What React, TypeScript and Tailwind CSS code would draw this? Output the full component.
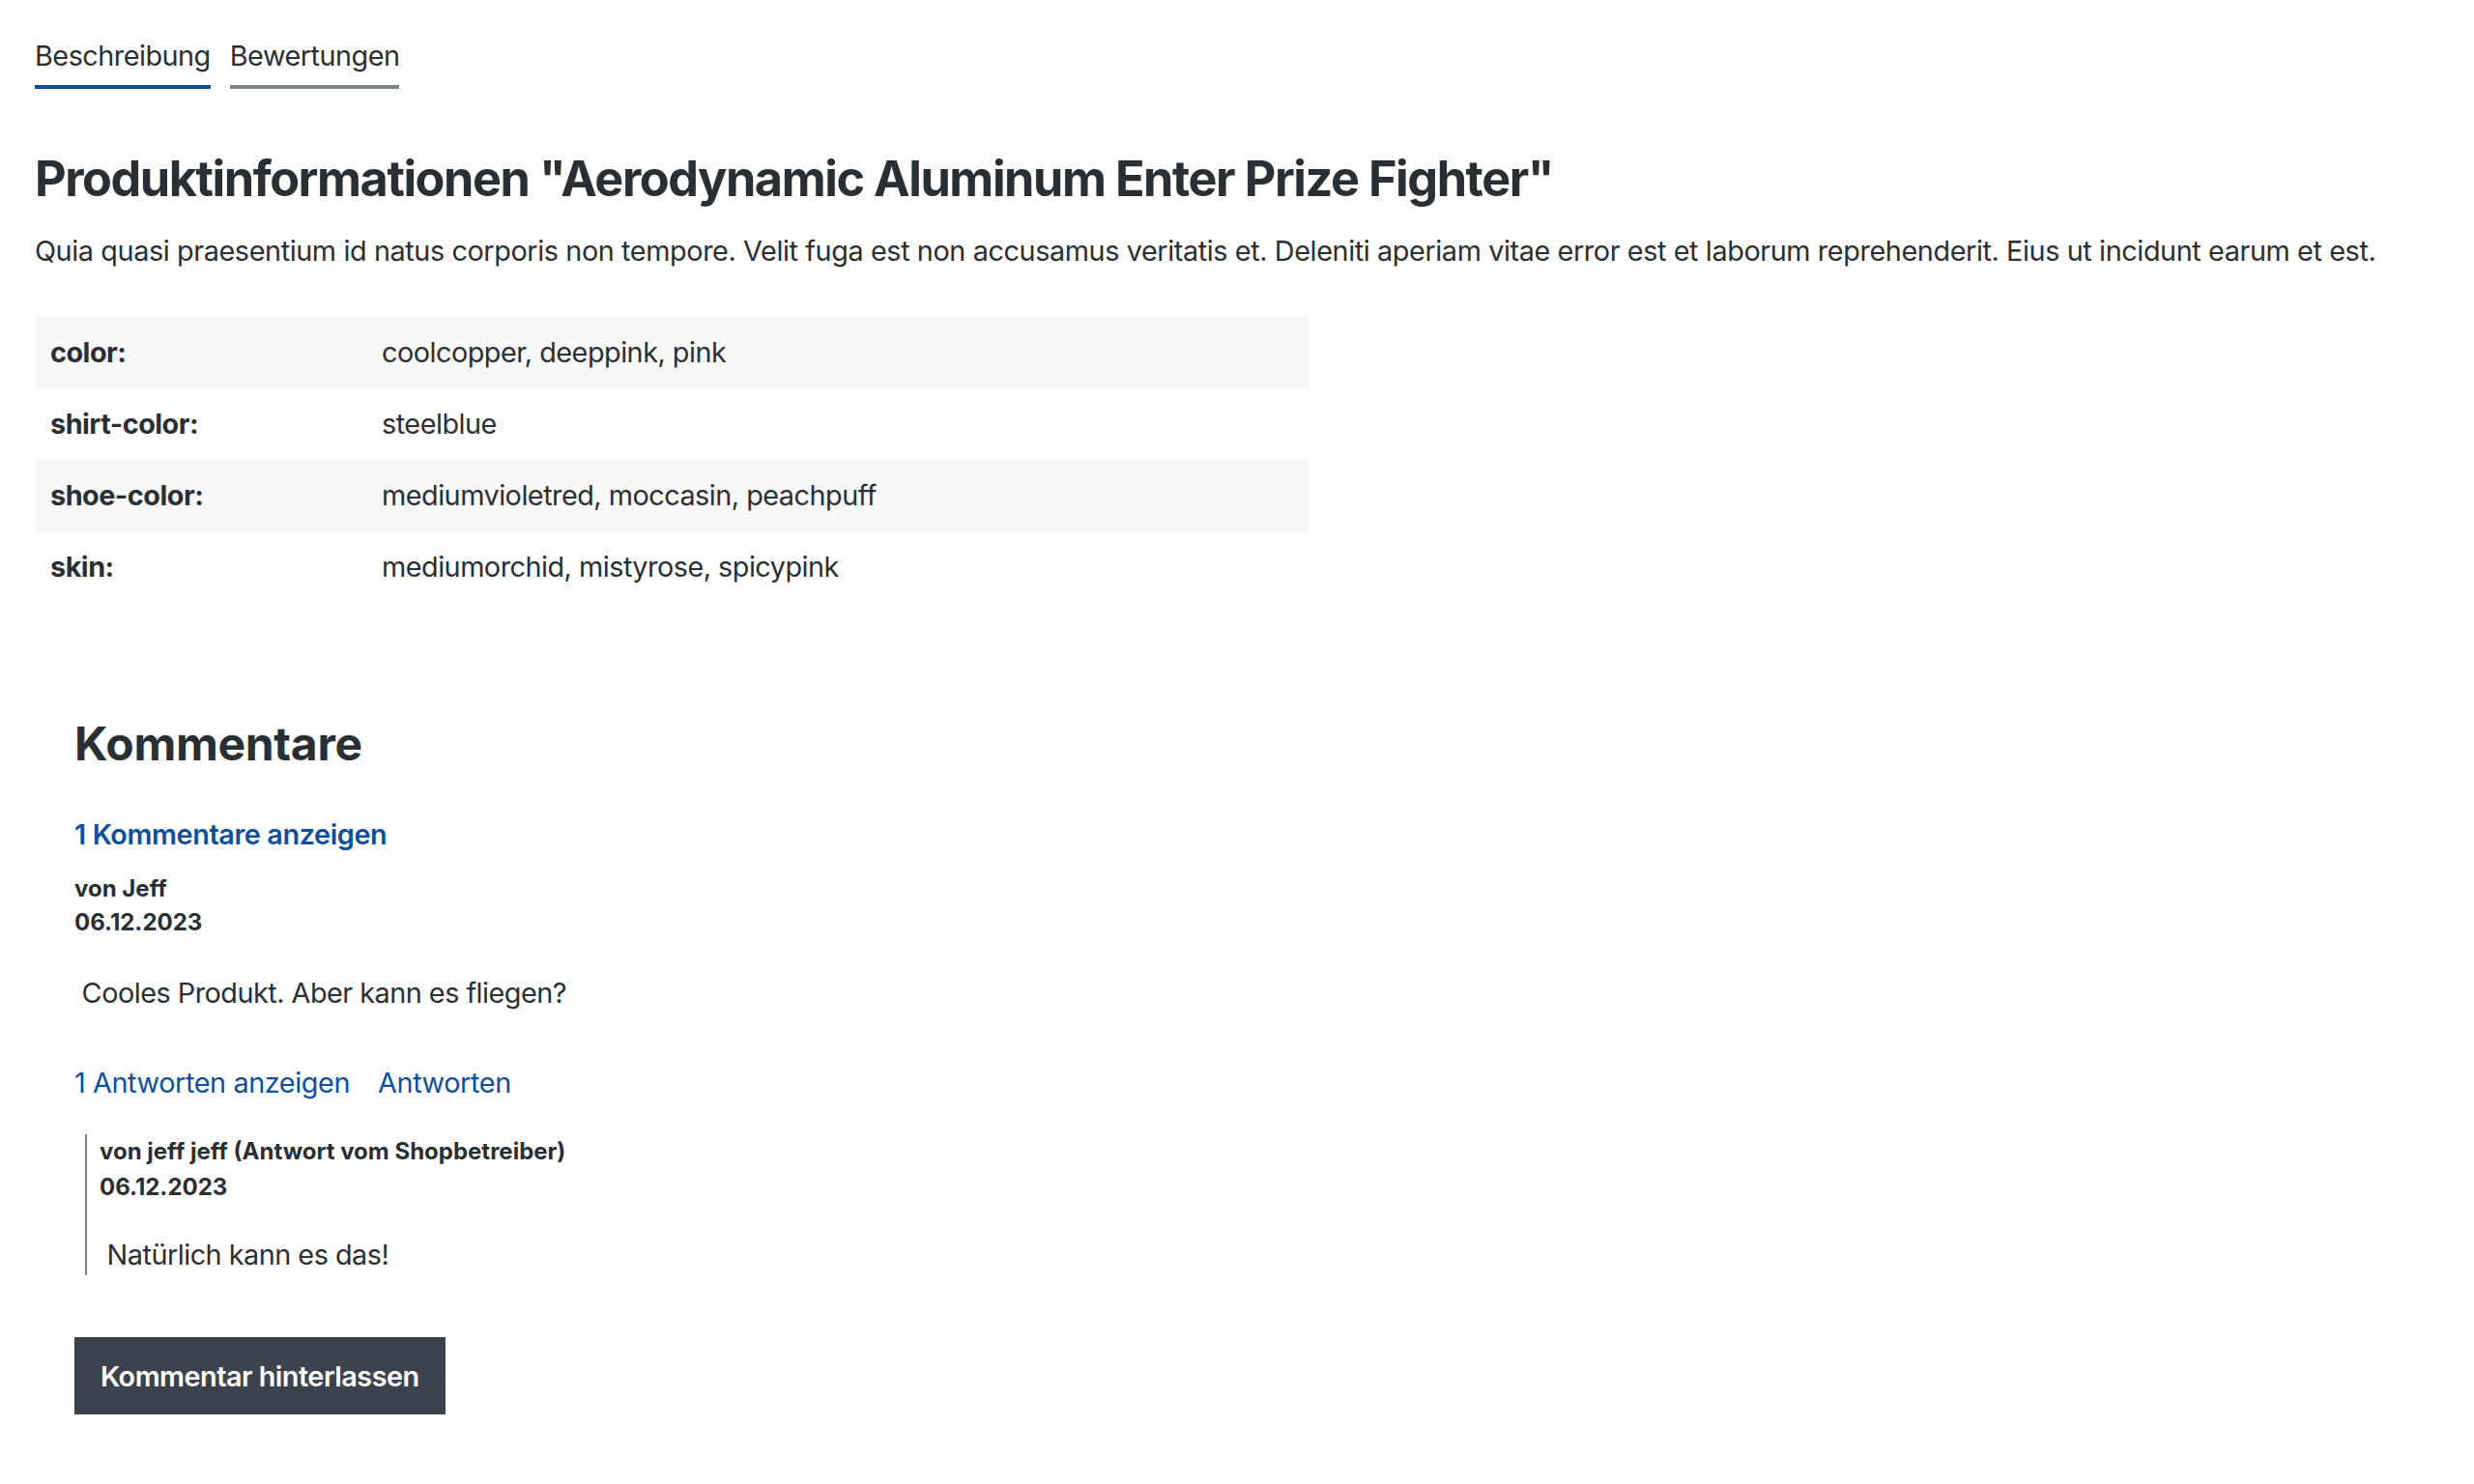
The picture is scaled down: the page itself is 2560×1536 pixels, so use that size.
import React, { useState } from "react";

const properties = [
  { label: "color:", value: "coolcopper, deeppink, pink" },
  { label: "shirt-color:", value: "steelblue" },
  { label: "shoe-color:", value: "mediumvioletred, moccasin, peachpuff" },
  { label: "skin:", value: "mediumorchid, mistyrose, spicypink" },
];

function Tabs() {
  const [active, setActive] = useState("beschreibung");
  return (
    <div className="flex gap-[20px]">
      <button
        onClick={() => setActive("beschreibung")}
        className={
          "pb-[9px] border-b-[4px] text-[28.8px] leading-[43.2px] cursor-pointer " +
          (active === "beschreibung" ? "border-[#0d4f9c]" : "border-[#7b838c]")
        }
      >
        Beschreibung
      </button>
      <button
        onClick={() => setActive("bewertungen")}
        className={
          "pb-[9px] border-b-[4px] text-[28.8px] leading-[43.2px] cursor-pointer " +
          (active === "bewertungen" ? "border-[#0d4f9c]" : "border-[#7b838c]")
        }
      >
        Bewertungen
      </button>
    </div>
  );
}

function Comments() {
  return (
    <section className="px-[41px] mt-[117px]">
      <h2 className="text-[48px] leading-[57.6px] font-bold tracking-[-0.3px]">Kommentare</h2>

      <a href="#" className="block mt-[43px] text-[28.8px] leading-[43.2px] font-semibold text-[#0d4f9c] tracking-[-0.4px]">
        1 Kommentare anzeigen
      </a>

      <div className="mt-[17px] text-[24px] leading-[35.5px] font-bold tracking-normal">
        <div>von Jeff</div>
        <div>06.12.2023</div>
      </div>
      <p className="mt-[33px] whitespace-pre-wrap">{" Cooles Produkt. Aber kann es fliegen?"}</p>

      <div className="mt-[50px] flex gap-[29px] text-[#0d4f9c] tracking-[-0.4px]">
        <a href="#">1 Antworten anzeigen</a>
        <a href="#">Antworten</a>
      </div>

      {/* Antwort */}
      <div className="mt-[32px] ml-[11px] border-l-[2px] border-[#7b838c] pl-[13px]">
        <div className="text-[24px] leading-[36.5px] font-bold tracking-normal">
          <div>von jeff jeff (Antwort vom Shopbetreiber)</div>
          <div>06.12.2023</div>
        </div>
        <p className="mt-[30px] whitespace-pre-wrap">{" Natürlich kann es das!"}</p>
      </div>

      <button className="mt-[64px] h-[80px] px-[27px] bg-[#3d434e] text-white font-semibold cursor-pointer">
        Kommentar hinterlassen
      </button>
    </section>
  );
}

export default function App() {
  return (
    <div className="min-h-screen bg-white text-[#2a2f34] font-['Inter',sans-serif] text-[28.8px] leading-[43.2px] tracking-[-0.5px] px-[36px] pt-[36px] pb-[60px]">
      <Tabs />

      <h1 className="mt-[63px] text-[50.4px] leading-[60.5px] font-bold tracking-[-1.45px]">
        Produktinformationen "Aerodynamic Aluminum Enter Prize Fighter"
      </h1>
      <p className="mt-[22px] tracking-[-0.4px]">
        Quia quasi praesentium id natus corporis non tempore. Velit fuga est non accusamus veritatis et. Deleniti aperiam vitae error est et laborum reprehenderit. Eius ut incidunt earum et est.
      </p>

      <div className="mt-[47px] w-[1319px]">
        {properties.map((p, i) => (
          <div
            key={p.label}
            className={"grid grid-cols-[343px_1fr] h-[74px] items-center " + (i % 2 === 0 ? "bg-[#f8f8f8]" : "")}
          >
            <div className="px-[16px] font-bold">{p.label}</div>
            <div className="px-[16px]">{p.value}</div>
          </div>
        ))}
      </div>

      <Comments />
    </div>
  );
}
